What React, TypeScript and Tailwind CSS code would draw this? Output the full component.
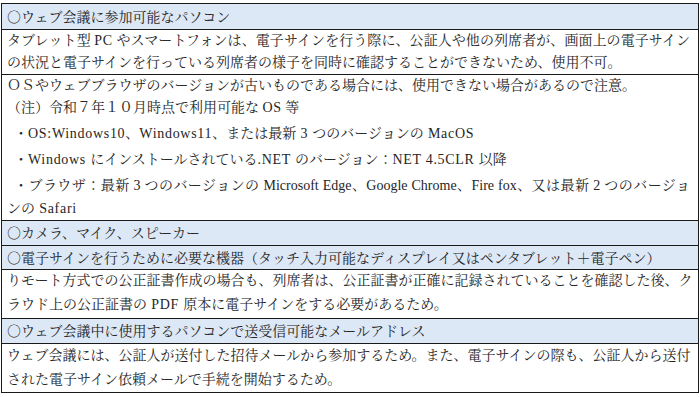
import React from "react";

const J = "text-justify [text-align-last:justify]";

function Line({ h, children, justify = false, className = "" }: { h: number; children: React.ReactNode; justify?: boolean; className?: string }) {
  return (
    <div
      className={`whitespace-nowrap overflow-visible flex items-center ${className}`}
      style={{ height: h }}
    >
      <div className={`w-full ${justify ? J : ""}`} style={{ lineHeight: `${h}px` }}>
        {children}
      </div>
    </div>
  );
}

function Header({ h, children, last = false }: { h: number; children: React.ReactNode; last?: boolean }) {
  return (
    <div className={`bg-[#dde8f6] pl-[5px] pr-[8px] ${last ? "" : "border-b border-[#1a1a1a]"}`}>
      <Line h={h}>{children}</Line>
    </div>
  );
}

function Body({ children, last = false }: { children: React.ReactNode; last?: boolean }) {
  return (
    <div className={`bg-white pl-[5px] pr-[8px] ${last ? "" : "border-b border-[#1a1a1a]"}`}>
      {children}
    </div>
  );
}

const C = ({ children }: { children: React.ReactNode }) => (
  <span className="font-['Noto_Serif_CJK_JP','Noto_Sans_CJK_JP',serif]">{children}</span>
);

const L = ({ children }: { children: React.ReactNode }) => (
  <span className="tracking-[0.7px]">{children}</span>
);

export default function App() {
  return (
    <div
      lang="ja"
      className="w-[700px] h-[397px] bg-white pt-[3px] pl-[1px] text-[14px] text-[#262626] font-['Liberation_Serif','Noto_Serif_CJK_JP','Noto_Sans_CJK_JP',serif]"
    >
      <div className="w-[698px] border border-[#1a1a1a]">
        <Header h={25}>
          <C>○</C>ウェブ会議に参加可能なパソコン
        </Header>
        <Body>
          <Line h={22} justify>
            タブレット型 <L>PC</L> やスマートフォンは、電子サインを行う際に、公証人や他の列席者が、画面上の電子サイン
          </Line>
          <Line h={22}>の状況と電子サインを行っている列席者の様子を同時に確認することができないため、使用不可。</Line>
        </Body>
        <Body>
          <Line h={21}>ＯＳやウェブブラウザのバージョンが古いものである場合には、使用できない場合があるので注意。</Line>
          <Line h={24}>
            （注）令和７年１０月時点で利用可能な <L>OS</L> 等
          </Line>
          <Line h={26} className="pl-[7px]">
            <C>・</C>
            <L>OS:Windows10</L>、<L>Windows11</L>、または最新<L> 3 </L>つのバージョンの<L> MacOS</L>
          </Line>
          <Line h={26} className="pl-[7px]">
            <C>・</C>
            <L>Windows </L>にインストールされている<L>.NET </L>のバージョン：<L>NET 4.5CLR </L>以降
          </Line>
          <Line h={26} className="pl-[7px]" justify>
            <C>・</C>ブラウザ：最新 3 つのバージョンの Microsoft Edge、Google Chrome、Fire fox、又は最新 2 つのバージョ
          </Line>
          <Line h={22}>
            ンの<L> Safari</L>
          </Line>
        </Body>
        <Header h={24}>
          <C>○</C>カメラ、マイク、スピーカー
        </Header>
        <Header h={23}>
          <C>○</C>電子サインを行うために必要な機器（タッチ入力可能なディスプレイ又はペンタブレット＋電子ペン）
        </Header>
        <Body>
          <Line h={22} justify>
            りモート方式での公正証書作成の場合も、列席者は、公正証書が正確に記録されていることを確認した後、ク
          </Line>
          <Line h={26}>
            ラウド上の公正証書の<L> PDF </L>原本に電子サインをする必要があるため。
          </Line>
        </Body>
        <Header h={24}>
          <C>○</C>ウェブ会議中に使用するパソコンで送受信可能なメールアドレス
        </Header>
        <Body last>
          <Line h={24} justify>
            ウェブ会議には、公証人が送付した招待メールから参加するため。また、電子サインの際も、公証人から送付
          </Line>
          <Line h={24}>された電子サイン依頼メールで手続を開始するため。</Line>
        </Body>
      </div>
    </div>
  );
}
